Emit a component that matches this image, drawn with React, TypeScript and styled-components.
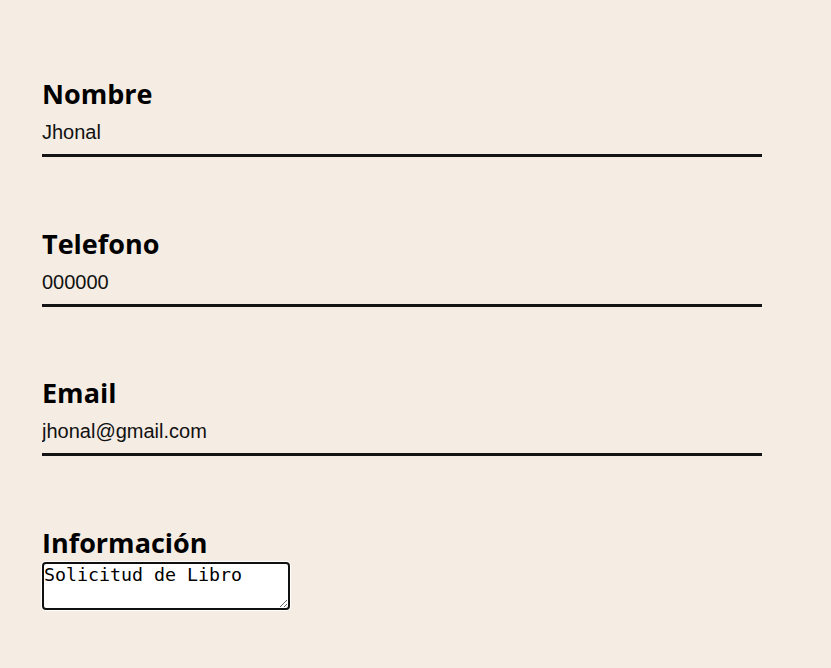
import React, { useEffect, useRef } from "react";
import styled, { createGlobalStyle } from "styled-components";

const GlobalStyle = createGlobalStyle`
  html, body {
    margin: 0;
    padding: 0;
    background: #f5ece3;
  }
  body {
    font-family: "Open Sans", "Noto Sans", sans-serif;
  }
`;

const Form = styled.form`
  display: flex;
  flex-direction: column;
  gap: 67.7px;
  padding: 75px 42px 40px;
`;

const Field = styled.div`
  display: flex;
  flex-direction: column;
  align-items: flex-start;
`;

const Label = styled.label`
  display: block;
  font-family: "Open Sans", "Noto Sans", sans-serif;
  font-weight: 700;
  font-size: 27px;
  line-height: normal;
  color: #000;
`;

const TextInput = styled.input`
  box-sizing: border-box;
  width: 720px;
  margin: 0;
  padding: 9px 0 10px;
  border: none;
  border-bottom: 3px solid #141414;
  background: transparent;
  font-family: "Liberation Sans", Arial, sans-serif;
  font-size: 20px;
  line-height: normal;
  color: #111;
  outline: none;
`;

const TextArea = styled.textarea`
  box-sizing: border-box;
  width: 248px;
  height: 48px;
  margin: 1px 0 0;
  padding: 0;
  border: 2px solid #101010;
  border-radius: 4px;
  box-shadow: 0 0 0 1px #ffffff;
  background: #fff;
  font-family: "DejaVu Sans Mono", monospace;
  font-size: 18.3px;
  line-height: normal;
  color: #000;
  outline: none;
  caret-color: #000;
`;

const fields = [
  { id: "nombre", label: "Nombre", value: "Jhonal", type: "text" },
  { id: "telefono", label: "Telefono", value: "000000", type: "tel" },
  { id: "email", label: "Email", value: "jhonal@gmail.com", type: "email" },
];

export default function App() {
  const ref = useRef<HTMLTextAreaElement>(null);

  useEffect(() => {
    const el = ref.current;
    if (el) {
      el.focus();
      const len = el.value.length;
      el.setSelectionRange(len, len);
    }
  }, []);

  return (
    <>
      <GlobalStyle />
      <Form onSubmit={(e) => e.preventDefault()}>
        {fields.map((f) => (
          <Field key={f.id}>
            <Label htmlFor={f.id}>{f.label}</Label>
            <TextInput id={f.id} type={f.type} defaultValue={f.value} />
          </Field>
        ))}
        <Field>
          <Label htmlFor="informacion">Información</Label>
          <TextArea ref={ref} id="informacion" defaultValue="Solicitud de Libro" />
        </Field>
      </Form>
    </>
  );
}
